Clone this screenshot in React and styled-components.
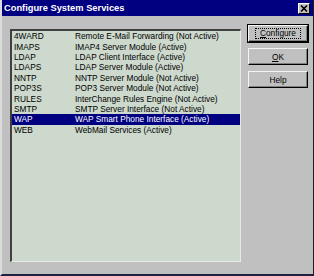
import styled, { createGlobalStyle } from "styled-components";

const GlobalStyle = createGlobalStyle`
  html, body {
    margin: 0;
    padding: 0;
    background: #c0c0c0;
  }
`;

const Window = styled.div`
  box-sizing: border-box;
  width: 314px;
  height: 276px;
  background: #c0c0c0;
  border-left: 2px solid #dcdcdc;
  border-right: 1px solid #202020;
  border-bottom: 2px solid #202040;
  display: flex;
  flex-direction: column;
  font-family: "Liberation Sans", Arial, sans-serif;
  color: #000;
`;

const TitleBar = styled.div`
  height: 16px;
  background: #000080;
  display: flex;
  align-items: center;
  justify-content: space-between;
  padding: 0 3px 0 2px;
`;

const Title = styled.span`
  color: #fff;
  font-weight: 700;
  font-size: 9.3px;
  letter-spacing: 0;
`;

const CloseButton = styled.div`
  box-sizing: border-box;
  width: 12px;
  height: 11px;
  background: #c0c0c0;
  border-top: 1px solid #fff;
  border-left: 1px solid #fff;
  border-right: 1px solid #000;
  border-bottom: 1px solid #000;
  display: flex;
  align-items: center;
  justify-content: center;
`;

const Body = styled.div`
  flex: 1;
  display: flex;
  padding: 9px 5px 12px 8px;
  gap: 7px;
`;

const ListBox = styled.div`
  box-sizing: border-box;
  margin-top: 4px;
  width: 231px;
  height: 233px;
  background: #cdd9cd;
  border-top: 2px solid #404040;
  border-left: 2px solid #404040;
  border-right: 1px solid #e8e8e8;
  border-bottom: 1px solid #e8e8e8;
  padding-top: 0;
`;

const Row = styled.div`
  display: flex;
  height: 10.4px;
  align-items: center;
  font-size: 8.3px;
  white-space: nowrap;
  background: ${(p) => (p.$selected ? "#000080" : "transparent")};
  color: ${(p) => (p.$selected ? "#fff" : "#000")};
`;

const Name = styled.span`
  width: 61px;
  padding-left: 2px;
`;

const Desc = styled.span``;

const Buttons = styled.div`
  display: flex;
  flex-direction: column;
  gap: 6px;
`;

const Button = styled.div`
  box-sizing: border-box;
  width: 60px;
  height: 17px;
  background: #c0c0c0;
  font-size: 8.3px;
  display: flex;
  align-items: center;
  justify-content: center;
  border-top: 1px solid #f4f4f4;
  border-left: 1px solid #f4f4f4;
  border-right: 1px solid #000;
  border-bottom: 1px solid #000;
  box-shadow: inset -1px -1px 0 #808080;
  outline: ${(p) => (p.$default ? "1px solid #000" : "none")};
  position: relative;
`;

const Focus = styled.span`
  border: 1px dotted #000;
  padding: 0 4px;
  line-height: 9px;
`;

const services = [
  ["4WARD", "Remote E-Mail Forwarding (Not Active)"],
  ["IMAPS", "IMAP4 Server Module (Active)"],
  ["LDAP", "LDAP Client Interface (Active)"],
  ["LDAPS", "LDAP Server Module (Active)"],
  ["NNTP", "NNTP Server Module (Not Active)"],
  ["POP3S", "POP3 Server Module (Not Active)"],
  ["RULES", "InterChange Rules Engine (Not Active)"],
  ["SMTP", "SMTP Server Interface (Not Active)"],
  ["WAP", "WAP Smart Phone Interface (Active)"],
  ["WEB", "WebMail Services (Active)"],
];

const App = () => (
  <>
    <GlobalStyle />
    <Window>
      <TitleBar>
        <Title>Configure System Services</Title>
        <CloseButton>
          <svg width="8" height="7" viewBox="0 0 8 7">
            <path d="M1 0.5 L7 6.5 M7 0.5 L1 6.5" stroke="#000" strokeWidth="1.6" />
          </svg>
        </CloseButton>
      </TitleBar>
      <Body>
        <ListBox>
          {services.map(([name, desc]) => (
            <Row key={name} $selected={name === "WAP"}>
              <Name>{name}</Name>
              <Desc>{desc}</Desc>
            </Row>
          ))}
        </ListBox>
        <Buttons>
          <Button $default>
            <Focus>
              <u>C</u>onfigure
            </Focus>
          </Button>
          <Button>
            <span>
              <u>O</u>K
            </span>
          </Button>
          <Button>Help</Button>
        </Buttons>
      </Body>
    </Window>
  </>
);

export default App;
